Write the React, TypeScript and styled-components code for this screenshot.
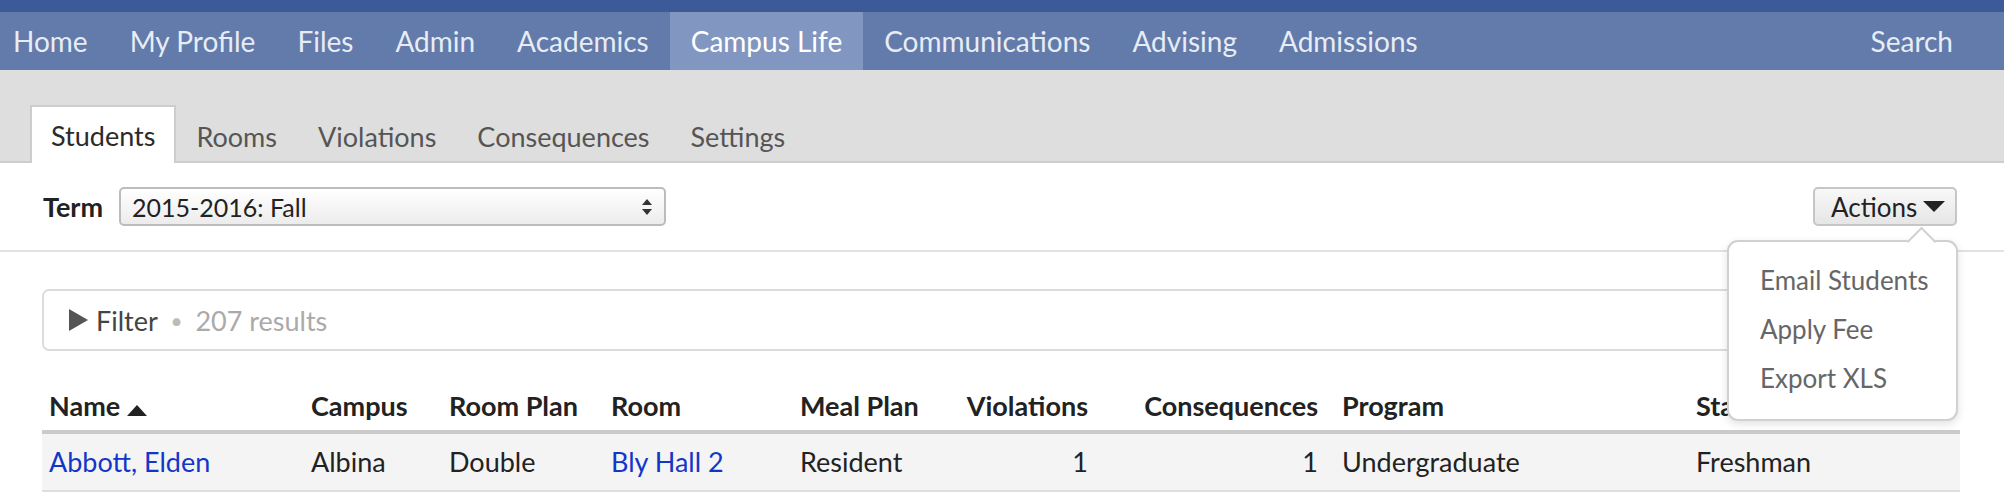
import styled, { createGlobalStyle } from "styled-components";

const GlobalStyle = createGlobalStyle`
    html, body {
        margin: 0;
        padding: 0;
        background: #fff;
    }
    body {
        font-family: "Lato", "Liberation Sans", sans-serif;
        font-size: 27px;
        color: #222;
    }
`;

const Page = styled.div`
    width: 2004px;
    height: 500px;
    overflow: hidden;
`;

const TopStrip = styled.div`
    height: 12px;
    background: #3c5a97;
`;

const NavBar = styled.nav`
    display: flex;
    height: 58px;
    background: #627bab;
    font-size: 28px;
`;

const NavItem = styled.a<{ $active?: boolean; $right?: boolean }>`
    display: flex;
    align-items: center;
    padding: 0 ${props => props.$right ? "51px" : "21px"} 0 ${props => props.$right ? "0" : "21px"};
    margin-left: ${props => props.$right ? "auto" : "0"};
    background: ${props => props.$active ? "#8197c1" : "transparent"};
    color: ${props => props.$active ? "#fff" : "#e8ecf4"};
    text-decoration: none;
    white-space: nowrap;

    &:first-child {
        padding-left: 13px;
    }
`;

const TabBar = styled.div`
    display: flex;
    align-items: flex-end;
    height: 93px;
    padding-left: 30px;
    background: #dedede;
    border-bottom: 2px solid #cdcdcd;
    box-sizing: border-box;
`;

const Tab = styled.div<{ $active?: boolean }>`
    display: flex;
    align-items: center;
    height: ${props => props.$active ? "58px" : "56px"};
    padding: 0 19px 0 ${props => props.$active ? "19px" : "0"};
    margin-bottom: -2px;
    margin-right: 18px;
    box-sizing: border-box;
    background: ${props => props.$active ? "#fff" : "transparent"};
    border: 2px solid ${props => props.$active ? "#cdcdcd" : "transparent"};
    border-bottom: none;
    color: ${props => props.$active ? "#2a2a2a" : "#555"};
`;

const TermRow = styled.div`
    display: flex;
    align-items: center;
    height: 89px;
    padding: 0 47px 0 43px;
    border-bottom: 2px solid #e2e2e2;
    box-sizing: border-box;
`;

const TermLabel = styled.label`
    font-weight: 700;
    margin-right: 16px;
`;

const SelectBox = styled.div`
    display: flex;
    align-items: center;
    justify-content: space-between;
    width: 547px;
    height: 39px;
    box-sizing: border-box;
    padding: 0 12px 0 11px;
    border: 2px solid #bcbcbc;
    border-radius: 5px;
    background: linear-gradient(#ffffff, #ececec);
    font-size: 25px;
    color: #222;
`;

const ActionsWrap = styled.div`
    position: relative;
    margin-left: auto;
`;

const ActionsButton = styled.button`
    display: flex;
    align-items: center;
    gap: 6px;
    height: 39px;
    width: 144px;
    padding: 0 0 0 16px;
    box-sizing: border-box;
    border: 2px solid #c6c6c6;
    border-radius: 5px;
    background: linear-gradient(#f8f8f8, #e6e6e6);
    font-family: inherit;
    font-size: 26px;
    color: #222;
`;

const Menu = styled.div`
    position: absolute;
    top: 53px;
    right: -1px;
    z-index: 5;
    width: 231px;
    height: 181px;
    box-sizing: border-box;
    padding: 14px 0 0 31px;
    background: #fff;
    border: 2px solid #d0d0d0;
    border-radius: 11px;
    box-shadow: 0 3px 8px rgba(0, 0, 0, 0.12);

    &::before {
        content: "";
        position: absolute;
        top: -11px;
        right: 24px;
        width: 19px;
        height: 19px;
        background: #fff;
        border-top: 2px solid #d0d0d0;
        border-left: 2px solid #d0d0d0;
        transform: rotate(45deg);
    }
`;

const MenuItem = styled.div`
    position: relative;
    height: 49px;
    line-height: 49px;
    color: #666;
    font-size: 26px;
    white-space: nowrap;
`;

const Content = styled.div`
    padding: 37px 46px 0 42px;
`;

const FilterBox = styled.div`
    display: flex;
    align-items: center;
    height: 62px;
    box-sizing: border-box;
    padding-left: 25px;
    border: 2px solid #dcdcdc;
    border-radius: 7px;
    color: #444;
`;

const FilterLabel = styled.span`
    margin-left: 8px;
`;

const Dot = styled.span`
    margin: 0 14px;
    color: #bbb;
    font-size: 16px;
`;

const Results = styled.span`
    color: #aaa;
`;

const Table = styled.table`
    width: 100%;
    margin-top: 30px;
    border-collapse: collapse;
    table-layout: fixed;
`;

const Th = styled.th<{ $w: number; $right?: boolean; $pr?: number }>`
    width: ${props => props.$w}px;
    height: 51px;
    padding: 0 ${props => props.$pr ?? 7}px 8px 7px;
    box-sizing: border-box;
    vertical-align: bottom;
    text-align: ${props => props.$right ? "right" : "left"};
    font-weight: 700;
    line-height: 32px;
    white-space: nowrap;
    border-bottom: 4px solid #cacaca;
`;

const Td = styled.td<{ $right?: boolean; $pr?: number }>`
    height: 56px;
    padding: 0 ${props => props.$pr ?? 7}px 0 7px;
    text-align: ${props => props.$right ? "right" : "left"};
    line-height: 32px;
    white-space: nowrap;
    background: #f4f4f4;
    border-bottom: 2px solid #dedede;
`;

const Link = styled.a`
    color: #1336c9;
    text-decoration: none;
`;

const Caret = ({ dir, w, h, color }: { dir: "up" | "down" | "right"; w: number; h: number; color: string }) => {
    const pts = dir === "up" ? `0,${h} ${w / 2},0 ${w},${h}` : dir === "down" ? `0,0 ${w},0 ${w / 2},${h}` : `0,0 ${w},${h / 2} 0,${h}`;
    return (
        <svg width={w} height={h} viewBox={`0 0 ${w} ${h}`} style={{ display: "inline-block" }}>
            <polygon points={pts} fill={color} />
        </svg>
    );
};

const SelectArrows = () => (
    <svg width="10" height="18" viewBox="0 0 10 18">
        <polygon points="0,7 5,1 10,7" fill="#333" />
        <polygon points="0,11 10,11 5,17" fill="#333" />
    </svg>
);

const navItems = ["Home", "My Profile", "Files", "Admin", "Academics", "Campus Life", "Communications", "Advising", "Admissions"];
const tabs = ["Students", "Rooms", "Violations", "Consequences", "Settings"];

export default function App() {
    return (
        <Page>
            <GlobalStyle />
            <TopStrip />
            <NavBar>
                {navItems.map(item => (
                    <NavItem key={item} $active={item === "Campus Life"}>{item}</NavItem>
                ))}
                <NavItem $right>Search</NavItem>
            </NavBar>
            <TabBar>
                {tabs.map(t => (
                    <Tab key={t} $active={t === "Students"}>{t}</Tab>
                ))}
            </TabBar>
            <TermRow>
                <TermLabel>Term</TermLabel>
                <SelectBox>
                    <span>2015-2016: Fall</span>
                    <SelectArrows />
                </SelectBox>
                <ActionsWrap>
                    <ActionsButton>
                        Actions
                        <Caret dir="down" w={22} h={11} color="#222" />
                    </ActionsButton>
                    <Menu>
                        <MenuItem>Email Students</MenuItem>
                        <MenuItem>Apply Fee</MenuItem>
                        <MenuItem>Export XLS</MenuItem>
                    </Menu>
                </ActionsWrap>
            </TermRow>
            <Content>
                <FilterBox>
                    <Caret dir="right" w={19} h={22} color="#555" />
                    <FilterLabel>Filter</FilterLabel>
                    <Dot>●</Dot>
                    <Results>207 results</Results>
                </FilterBox>
                <Table>
                    <thead>
                        <tr>
                            <Th $w={262}>Name <Caret dir="up" w={20} h={11} color="#222" /></Th>
                            <Th $w={138}>Campus</Th>
                            <Th $w={162}>Room Plan</Th>
                            <Th $w={189}>Room</Th>
                            <Th $w={161}>Meal Plan</Th>
                            <Th $w={141} $right>Violations</Th>
                            <Th $w={240} $right $pr={17}>Consequences</Th>
                            <Th $w={354}>Program</Th>
                            <Th $w={271}>Status</Th>
                        </tr>
                    </thead>
                    <tbody>
                        <tr>
                            <Td><Link>Abbott, Elden</Link></Td>
                            <Td>Albina</Td>
                            <Td>Double</Td>
                            <Td><Link>Bly Hall 2</Link></Td>
                            <Td>Resident</Td>
                            <Td $right>1</Td>
                            <Td $right $pr={17}>1</Td>
                            <Td>Undergraduate</Td>
                            <Td>Freshman</Td>
                        </tr>
                    </tbody>
                </Table>
            </Content>
        </Page>
    );
}
